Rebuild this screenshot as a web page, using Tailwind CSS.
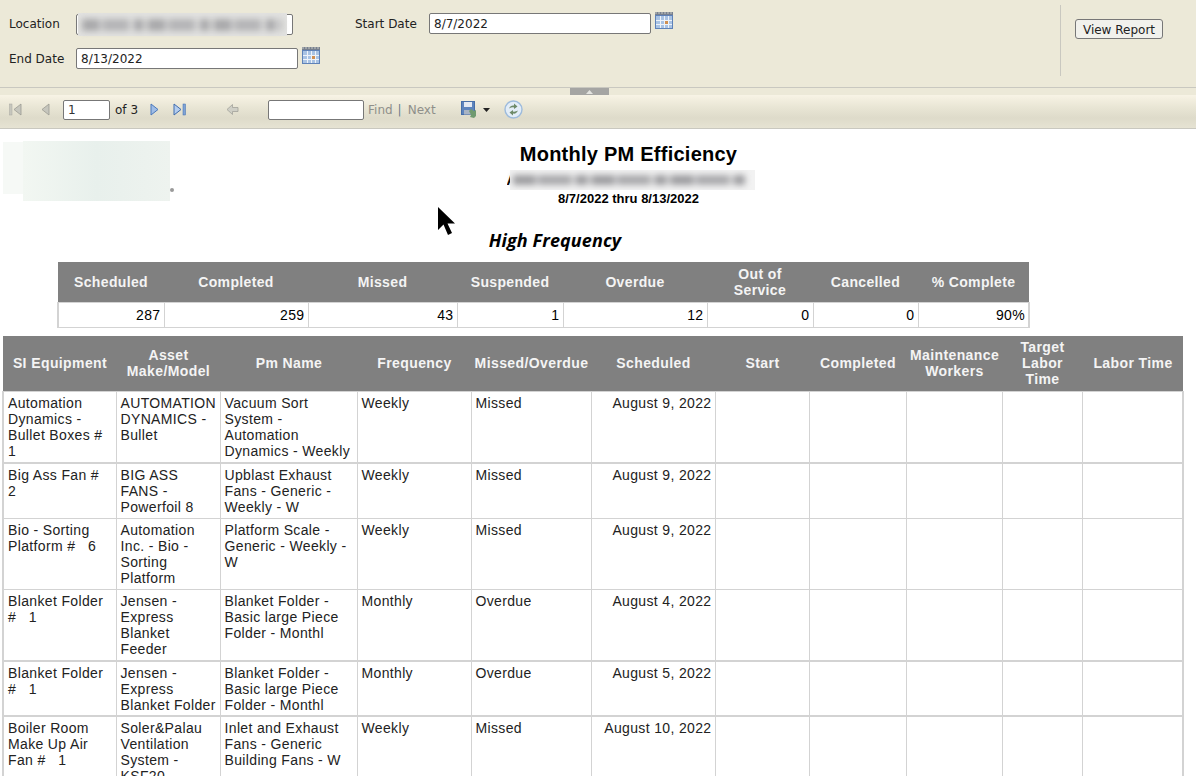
<!DOCTYPE html>
<html lang="en">

<head>
    <meta charset="UTF-8">
    <title>Monthly PM Efficiency</title>
    <script src="https://cdn.jsdelivr.net/npm/@tailwindcss/browser@4"></script>
</head>

<body class="bg-white overflow-hidden h-[776px] relative font-['Liberation_Sans',Arial,sans-serif] text-black">
    <!-- parameter area -->
    <div class="h-[88px] bg-[#ece9d8] border-b border-[#c9c8c0] flex font-['DejaVu_Sans',sans-serif] text-[12px] text-[#222]">
        <div class="w-[1060px] h-[87px] grid grid-cols-[67px_279px_74px_1fr] grid-rows-[35px_35px] pt-[6px] pl-[9px] content-start">
            <div class="flex items-center pt-[1px]">Location</div>
            <div class="flex items-center">
                <div class="relative w-[217px] h-[21px] mt-[2px] bg-white border border-[#777] rounded-[2px]">
                    <div class="absolute left-[1px] -top-[2px] w-[209px] h-[23px] bg-[#e2e2e0]"></div>
                    <div class="absolute left-[5px] top-[4px] w-[200px] h-[12px] bg-[repeating-linear-gradient(90deg,#a8a8aa_0_17px,#cfcfd0_17px_21px,#b4b4b6_21px_47px,#dcdcdc_47px_52px,#a8a8aa_52px_61px,#d4d4d4_61px_66px)] blur-[3px]"></div>
                </div>
            </div>
            <div class="flex items-center pt-[1px]">Start Date</div>
            <div class="flex items-start pt-[7px]">
                <input value="8/7/2022" class="w-[222px] h-[21px] bg-white border border-[#777] rounded-[2px] px-[4px] pt-[1px] text-[12px]">
                <svg class="ml-[4px] -mt-[1px]" width="18" height="17" viewBox="0 0 18 17"><rect width="18" height="17" fill="#5f82b8"/><rect width="18" height="3" fill="#77808f"/><path d="M1 0v2M4 0v2M7 0v2M10 0v2M13 0v2M16 0v2" stroke="#c9c9c2"/><rect x="1" y="4" width="16" height="12" fill="#a9c3e4"/><path d="M1 8.500h16M1 12.500h16M5.500 4v12M9.500 4v12M13.500 4v12" stroke="#eef3fa"/><rect x="10" y="9" width="3" height="3" fill="#cf8f52"/></svg>
            </div>
            <div class="flex items-center">End Date</div>
            <div class="flex items-start pt-[7px] col-span-3">
                <input value="8/13/2022" class="w-[222px] h-[21px] bg-white border border-[#777] rounded-[2px] px-[4px] pt-[1px] text-[12px]">
                <svg class="ml-[4px] -mt-[1px]" width="18" height="17" viewBox="0 0 18 17"><rect width="18" height="17" fill="#5f82b8"/><rect width="18" height="3" fill="#77808f"/><path d="M1 0v2M4 0v2M7 0v2M10 0v2M13 0v2M16 0v2" stroke="#c9c9c2"/><rect x="1" y="4" width="16" height="12" fill="#a9c3e4"/><path d="M1 8.500h16M1 12.500h16M5.500 4v12M9.500 4v12M13.500 4v12" stroke="#eef3fa"/><rect x="10" y="9" width="3" height="3" fill="#cf8f52"/></svg>
            </div>
        </div>
        <div class="h-[71px] mt-[5px] border-l border-[#c9c8c0] pl-[14px] pt-[14px]">
            <button class="w-[88px] h-[20px] bg-[#f1f1ec] border border-[#777] rounded-[3px] text-[12px] leading-[20px]">View Report</button>
        </div>
    </div>

    <!-- toolbar -->
    <div class="relative h-[41px] border-b border-[#c9c8c0] bg-[linear-gradient(#ece9d8_7px,#f8f4e6_7px,#f4f0e1_10px,#e8e5d4_20px,#dedbca_30px,#e6e3d3_40px)] flex items-center pt-[3px] font-['DejaVu_Sans',sans-serif] text-[12px] text-[#333]">
        <div class="absolute left-[570px] top-0 w-[39px] h-[7px] bg-[#a5a5a3] flex justify-center items-center">
            <svg width="7" height="4" viewBox="0 0 7 4"><path d="M3.5 0L7 4H0z" fill="#e4e4e0"/></svg>
        </div>
        <svg class="ml-[9px]" width="13" height="13" viewBox="0 0 13 13"><rect x="0.5" y="1" width="2.5" height="11" fill="#c6c6bd" stroke="#a8a8a0" stroke-width=".5"/><path d="M12 1v11L5 6.500z" fill="#c6c6bd" stroke="#9a9a92" stroke-width=".8"/></svg>
        <svg class="ml-[19px]" width="9" height="13" viewBox="0 0 9 13"><path d="M8 1v11L1 6.500z" fill="#c6c6bd" stroke="#9a9a92" stroke-width=".8"/></svg>
        <input value="1" class="ml-[13px] w-[47px] h-[20px] bg-white border border-[#777] rounded-[2px] px-[4px] pt-[1px] text-[12px]">
        <span class="ml-[5px] text-[#222]">of 3</span>
        <svg class="ml-[12px]" width="9" height="13" viewBox="0 0 9 13"><path d="M1 1v11L8 6.500z" fill="#9fbde6" stroke="#4a78bb"/></svg>
        <svg class="ml-[14px]" width="13" height="13" viewBox="0 0 13 13"><path d="M1 1v11L8 6.500z" fill="#b4cdee" stroke="#3f6cae"/><rect x="10" y="1" width="2.500" height="11" fill="#7fa3d6" stroke="#3f6cae" stroke-width=".5"/></svg>
        <svg class="ml-[40px]" width="13" height="13" viewBox="0 0 13 13"><path d="M1 6.500L6.500 1.500V4.500H12V8.500H6.500V11.500z" fill="#cfcfc6" stroke="#a2a29a" stroke-width=".8"/></svg>
        <input class="ml-[29px] w-[96px] h-[20px] bg-white border border-[#777] rounded-[2px] px-[4px]">
        <span class="ml-[4px] text-[#8f8f8a]">Find</span>
        <span class="ml-[5px] text-[#6c7a8c]">|</span>
        <span class="ml-[6px] text-[#8f8f8a]">Next</span>
        <svg class="ml-[25px]" width="18" height="18" viewBox="0 0 18 18"><rect x="0.500" y="0.500" width="13" height="13" fill="#5d84bd" stroke="#476ea8"/><rect x="3" y="1" width="8" height="5" fill="#e3e9f2"/><rect x="3" y="9" width="8" height="4.500" fill="#a9b4c4"/><path d="M8 10l2-2 3 2 2-1v6l-2 2-4-1 1-2z" fill="#6f9a70"/></svg>
        <svg class="ml-[4px]" width="7" height="4" viewBox="0 0 7 4"><path d="M0 0h7L3.500 4z" fill="#222"/></svg>
        <svg class="ml-[14px]" width="19" height="19" viewBox="0 0 19 19"><circle cx="9.500" cy="9.500" r="8.500" fill="#e3edf7" stroke="#9dbbdc" stroke-width="1.400"/><path d="M5 8.500c1-2.500 3-3.500 5-3V3.500l3.500 3-3.500 2.500V7.500C8.500 7 7 7.500 5 8.500z" fill="#6d8a68"/><path d="M14 10.500c-1 2.500-3 3.500-5 3v2l-3.500-3L9 10v1.500c1.500.5 3 0 5-1z" fill="#6d8a68"/></svg>
    </div>

    <!-- report -->
    <div class="relative">
        <div class="h-[133px] relative">
            <div class="absolute left-[3px] top-[13px] w-[20px] h-[52px] bg-[#f6f9f6]"></div>
            <div class="absolute left-[23px] top-[12px] w-[147px] h-[60px] bg-linear-to-r from-[#f2f7f2] via-[#e8f0ec] to-[#eef3ef]"></div>
            <div class="absolute left-[170px] top-[59px] w-[4px] h-[4px] rounded-full bg-[#9a9a9a]"></div>
            <div class="w-[1182px] pl-[75px] pt-[14px] relative">
                <div class="text-center font-bold text-[20px] leading-[23px] tracking-[0.25px]">Monthly PM Efficiency</div>
                <div class="h-[20px] mt-[4px] flex justify-center">
                    <div class="relative ml-[4px] w-[248px] h-[20px] overflow-hidden bg-white">
                        <span class="absolute left-0 top-0 font-bold text-[14px] leading-[20px]">A</span>
                        <div class="absolute left-[3px] top-0 w-[245px] h-[20px] bg-[#f2f2f2]"></div>
                        <div class="absolute left-[6px] top-[5px] w-[232px] h-[10px] bg-[repeating-linear-gradient(90deg,#9d9da0_0_22px,#c8c8ca_22px_26px,#a9a9ac_26px_58px,#d8d8d8_58px_63px,#9d9da0_63px_74px,#d0d0d0_74px_79px)] blur-[3px]"></div>
                    </div>
                </div>
                <div class="text-center font-bold text-[13px] leading-[16px] mt-[1px]">8/7/2022 thru 8/13/2022</div>
                <div class="w-[1110px] -ml-[75px] text-center mt-[21px] font-['Open_Sans',sans-serif] italic font-bold text-[18px] leading-[24px] tracking-[0.1px]">High Frequency</div>
            </div>
        </div>

        <!-- summary table -->
        <table class="ml-[57px] w-[971px] table-fixed border-collapse text-[14px] leading-[16px] tracking-[0.35px]">
            <colgroup>
                <col class="w-[106px]"><col class="w-[144px]"><col class="w-[149px]"><col class="w-[106px]"><col class="w-[144px]"><col class="w-[106px]"><col class="w-[105px]"><col class="w-[111px]">
            </colgroup>
            <thead>
                <tr class="h-[40px] bg-[#808080] text-[#f4f4f4] font-bold text-center">
                    <td>Scheduled</td><td>Completed</td><td>Missed</td><td>Suspended</td><td>Overdue</td><td>Out of<br>Service</td><td>Cancelled</td><td>% Complete</td>
                </tr>
            </thead>
            <tbody class="[&_td]:border [&_td]:border-[#d3d3d3] [&_td]:pr-[3px] [&_td:first-child]:border-l-2 [&_td:last-child]:border-r-2">
                <tr class="h-[25px] text-right">
                    <td>287</td><td>259</td><td>43</td><td>1</td><td>12</td><td>0</td><td>0</td><td>90%</td>
                </tr>
            </tbody>
        </table>

        <!-- detail table -->
        <table class="ml-[2px] mt-[8px] w-[1180px] table-fixed border-collapse text-[14px] leading-[16px] tracking-[0.35px] text-[#222]">
            <colgroup>
                <col class="w-[113px]"><col class="w-[104px]"><col class="w-[137px]"><col class="w-[114px]"><col class="w-[120px]"><col class="w-[124px]"><col class="w-[94px]"><col class="w-[97px]"><col class="w-[96px]"><col class="w-[80px]"><col class="w-[101px]">
            </colgroup>
            <thead>
                <tr class="h-[56px] bg-[#808080] text-[#f4f4f4] font-bold text-center tracking-[0.4px] [&>td]:pl-[1px]">
                    <td>SI Equipment</td><td>Asset<br>Make/Model</td><td>Pm Name</td><td>Frequency</td><td>Missed/Overdue</td><td>Scheduled</td><td>Start</td><td>Completed</td><td>Maintenance<br>Workers</td><td>Target<br>Labor<br>Time</td><td>Labor Time</td>
                </tr>
            </thead>
            <tbody class="[&_td]:border [&_td]:border-[#d3d3d3] [&_td]:align-top [&_td]:pl-[4px] [&_td]:pr-[3px] [&_td]:pt-[3px] [&_td]:pb-[3px] [&_td:first-child]:border-l-2 [&_td:last-child]:border-r-2">
                <tr class="h-[71px] [&>td]:border-b-2! [&>td]:pb-[2px]!">
                    <td>Automation Dynamics - Bullet Boxes #<br>1</td><td class="whitespace-nowrap">AUTOMATION<br>DYNAMICS -<br>Bullet</td><td>Vacuum Sort System - Automation Dynamics - Weekly</td><td>Weekly</td><td>Missed</td><td class="text-right">August 9, 2022</td><td></td><td></td><td></td><td></td><td></td>
                </tr>
                <tr class="h-[55px]">
                    <td>Big Ass Fan #<br>2</td><td>BIG ASS FANS - Powerfoil 8</td><td>Upblast Exhaust Fans - Generic - Weekly - W</td><td>Weekly</td><td>Missed</td><td class="text-right">August 9, 2022</td><td></td><td></td><td></td><td></td><td></td>
                </tr>
                <tr class="h-[71px]">
                    <td>Bio - Sorting Platform #&nbsp;&nbsp; 6</td><td>Automation Inc. - Bio - Sorting<br>Platform</td><td>Platform Scale - Generic - Weekly - W</td><td>Weekly</td><td>Missed</td><td class="text-right">August 9, 2022</td><td></td><td></td><td></td><td></td><td></td>
                </tr>
                <tr class="h-[72px] [&>td]:border-b-2!">
                    <td>Blanket Folder #&nbsp;&nbsp; 1</td><td>Jensen -<br>Express<br>Blanket<br>Feeder</td><td>Blanket Folder - Basic large Piece Folder - Monthl</td><td>Monthly</td><td>Overdue</td><td class="text-right">August 4, 2022</td><td></td><td></td><td></td><td></td><td></td>
                </tr>
                <tr class="h-[55px] [&>td]:border-b-2! [&>td]:pb-[2px]!">
                    <td>Blanket Folder #&nbsp;&nbsp; 1</td><td class="whitespace-nowrap">Jensen -<br>Express<br>Blanket Folder</td><td>Blanket Folder - Basic large Piece Folder - Monthl</td><td>Monthly</td><td>Overdue</td><td class="text-right">August 5, 2022</td><td></td><td></td><td></td><td></td><td></td>
                </tr>
                <tr class="h-[72px]">
                    <td>Boiler Room Make Up Air Fan #&nbsp;&nbsp; 1</td><td>Soler&amp;Palau Ventilation System - KSF20</td><td>Inlet and Exhaust Fans - Generic Building Fans - W</td><td>Weekly</td><td>Missed</td><td class="text-right">August 10, 2022</td><td></td><td></td><td></td><td></td><td></td>
                </tr>
            </tbody>
        </table>

        <!-- mouse cursor from the capture -->
        <svg class="absolute left-[437px] top-[77px]" width="20" height="31" viewBox="0 0 20 31"><path d="M1 1V24L6.500 18.500L11 29L15 27L10.500 17.500H18z" fill="#000"/></svg>
    </div>
</body>

</html>
